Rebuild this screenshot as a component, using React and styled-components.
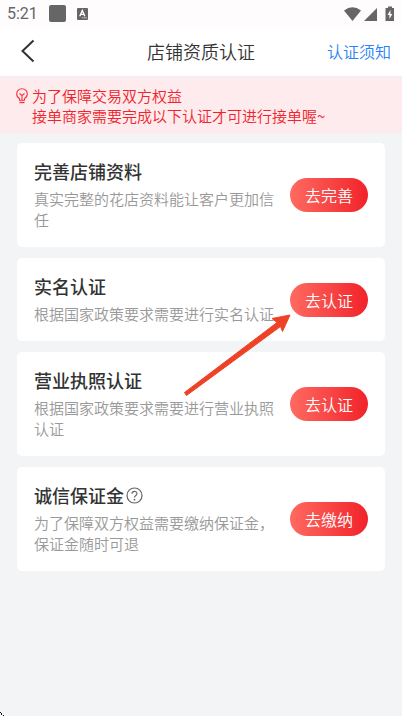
import React from "react";
import styled, { createGlobalStyle } from "styled-components";

const items = [
  {
    id: 1,
    title: "完善店铺资料",
    desc: "真实完整的花店资料能让客户更加信任",
    action: "去完善",
  },
  {
    id: 2,
    title: "实名认证",
    desc: "根据国家政策要求需要进行实名认证",
    action: "去认证",
    pointed: true,
  },
  {
    id: 3,
    title: "营业执照认证",
    desc: "根据国家政策要求需要进行营业执照认证",
    action: "去认证",
  },
  {
    id: 4,
    title: "诚信保证金",
    desc: "为了保障双方权益需要缴纳保证金，保证金随时可退",
    action: "去缴纳",
    help: true,
  },
];

const StatusBar = () => (
  <StatusContainer>
    <div className="side">
      <span className="time">5:21</span>
      <span className="block" />
      <svg width="11" height="12" viewBox="0 0 11 12">
        <rect width="11" height="12" rx="1" fill="#666" />
        <path
          d="M2.8 8.2 L5.3 2.4 L7.8 8.2 M3.7 6.4 H6.9"
          fill="none"
          stroke="#fff"
          strokeWidth="1.4"
        />
        <path d="M5 9.8 H10" stroke="#bbb" strokeWidth="1" />
      </svg>
    </div>
    <svg width="52" height="16" viewBox="0 0 52 16" fill="#666">
      <path d="M0 4.6 Q8.5 -2.2 17 4.6 L8.5 15 Z" />
      <path d="M33 2 V15 H20 Z" />
      <path
        fillRule="evenodd"
        d="M44 0.500 H48 V2 H50 V15 H41.500 V2 H44 Z M46.500 4 L43.500 9 H45.400 V13 L48.400 8 H46.500 Z"
      />
    </svg>
  </StatusContainer>
);

const Header = () => (
  <HeaderContainer>
    <button className="back" aria-label="返回">
      <svg width="14" height="24" viewBox="0 0 14 24">
        <path
          d="M12.500 1.500 L1.500 12 L12.500 22.500"
          fill="none"
          stroke="#333"
          strokeWidth="2"
        />
      </svg>
    </button>
    <h1>店铺资质认证</h1>
    <a href="#notice">认证须知</a>
  </HeaderContainer>
);

const Notice = () => (
  <NoticeContainer id="notice">
    <svg width="12" height="16" viewBox="0 0 12 16">
      <g fill="none" stroke="#f5333b" strokeWidth="1.1">
        <path d="M3.500 10.500 C1.500 9.300 0.700 7.700 0.700 5.900 A5.300 5.200 0 0 1 11.300 5.900 C11.300 7.700 10.500 9.300 8.500 10.500 V12.300 H3.500 Z" />
        <path d="M3.500 5.500 L6 7.500 L8.500 5.500 M6 7.500 V12" />
        <path d="M3.500 14.500 H8.500" strokeWidth="1.4" />
      </g>
    </svg>
    <p>
      为了保障交易双方权益
      <br />
      接单商家需要完成以下认证才可进行接单喔~
    </p>
  </NoticeContainer>
);

const Card = ({ title, desc, action, help, pointed }) => (
  <CardContainer>
    <div className="info">
      <h2>
        {title}
        {help && (
          <HelpButton aria-label="说明">
            <svg width="17" height="17" viewBox="0 0 17 17">
              <g fill="none" stroke="#666" strokeWidth="1.2">
                <circle cx="8.500" cy="8.500" r="7.500" />
                <path d="M6 6.800 C6 3.500 11 3.500 11 6.600 C11 8.500 8.500 8.400 8.500 10.600" />
              </g>
              <circle cx="8.500" cy="12.700" r="0.900" fill="#666" />
            </svg>
          </HelpButton>
        )}
      </h2>
      <p>{desc}</p>
    </div>
    <Action>
      <ActionButton>{action}</ActionButton>
      {pointed && (
        <Pointer width="110" height="84" viewBox="0 0 110 84">
          <path
            d="M2.500 79.500 L95 9.500 L90 5.500 L108 2 L100.500 18.500 L98.500 13.500 L4.500 82.500 Z"
            fill="#ee4227"
            stroke="#ee4227"
            strokeLinejoin="round"
          />
        </Pointer>
      )}
    </Action>
  </CardContainer>
);

const App = () => (
  <Page>
    <GlobalStyle />
    <StatusBar />
    <Header />
    <Notice />
    <List>
      {items.map((item) => (
        <Card key={item.id} {...item} />
      ))}
    </List>
    <CornerMark width="4" height="4" viewBox="0 0 4 4">
      <path d="M0 0 H1 V1 H2 V3 H4 V4 H3 V3 H1 V1 H0 Z" fill="#111" />
    </CornerMark>
  </Page>
);

const GlobalStyle = createGlobalStyle`
  * {
    box-sizing: border-box;
    margin: 0;
    padding: 0;
  }
  body {
    background: #f3f4f6;
    color: #333;
    font-family: "Noto Sans CJK SC", "Noto Sans", sans-serif;
    font-weight: 350;
  }
  button {
    border: none;
    background: transparent;
    font-family: inherit;
    font-weight: inherit;
    cursor: pointer;
  }
`;

const Page = styled.main`
  min-height: 100vh;
`;

const StatusContainer = styled.div`
  height: 27px;
  padding: 0 6px 0 7px;
  display: flex;
  align-items: center;
  justify-content: space-between;
  background: #fffcfe;

  .side {
    display: flex;
    align-items: center;
  }
  .time {
    font-family: Roboto, sans-serif;
    font-size: 16px;
    font-weight: 400;
    color: #666;
  }
  .block {
    width: 17px;
    height: 17px;
    margin: 0 11px 0 11px;
    border-radius: 2px;
    background: #666;
  }
`;

const HeaderContainer = styled.header`
  height: 50px;
  padding: 0 11px 2px 21px;
  display: grid;
  grid-template-columns: 1fr auto 1fr;
  align-items: center;
  background: #fff;
  border-bottom: 1px solid #eeeef0;

  .back {
    justify-self: start;
    display: flex;
  }
  h1 {
    margin-right: 10px;
    font-size: 18px;
    font-weight: inherit;
  }
  a {
    justify-self: end;
    font-size: 16px;
    color: #2a82f6;
    text-decoration: none;
  }
`;

const NoticeContainer = styled.section`
  padding: 9px 16px 7px;
  display: flex;
  align-items: flex-start;
  gap: 4px;
  background: #feebed;

  svg {
    margin-top: 2px;
  }
  p {
    font-size: 15px;
    line-height: 20px;
    color: #f0222b;
  }
`;

const List = styled.div`
  padding: 10px 17px;
  display: flex;
  flex-direction: column;
  gap: 11px;
`;

const CardContainer = styled.section`
  padding: 0 17px;
  display: flex;
  align-items: center;
  justify-content: space-between;
  gap: 12px;
  background: #fff;
  border-radius: 5px;

  .info {
    flex: 1;
    padding: 16px 0 17px;
  }
  h2 {
    display: flex;
    align-items: center;
    gap: 2px;
    margin-bottom: 5px;
    font-size: 18px;
    font-weight: 500;
    line-height: 24px;
  }
  p {
    font-size: 15px;
    line-height: 21px;
    color: #999;
  }
`;

const HelpButton = styled.button`
  display: flex;
`;

const Action = styled.div`
  position: relative;
`;

const ActionButton = styled.button`
  display: block;
  width: 78px;
  height: 34px;
  border-radius: 17px;
  background: linear-gradient(90deg, #ff6a61, #f1232a);
  color: #fff;
  font-size: 16px;
`;

const Pointer = styled.svg`
  position: absolute;
  top: 30px;
  right: 76px;
  z-index: 1;
  pointer-events: none;
`;

const CornerMark = styled.svg`
  position: fixed;
  left: 0;
  bottom: 0;
`;

export default App;
